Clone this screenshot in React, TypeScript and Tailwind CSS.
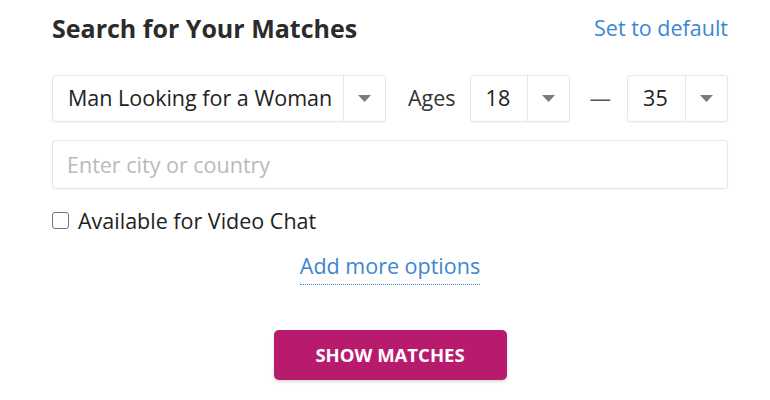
import React from "react";

// Search box for matches: gender select, age range, location, video chat flag.

function Caret() {
  return (
    <svg width="13" height="7" viewBox="0 0 13 7" className="block">
      <path d="M0 0 L13 0 L6.5 7 Z" fill="#7a7a7a" />
    </svg>
  );
}

function SelectBox({ value, width, textWidth }: { value: string; width: string; textWidth: string }) {
  return (
    <div
      className={`flex h-[47px] ${width} shrink-0 items-stretch rounded-[3px] border border-[#e6e6e6] bg-white shadow-[0_1px_2px_rgba(0,0,0,0.04)]`}
    >
      <div className={`flex ${textWidth} items-center pl-[15px] text-[21.5px] text-[#222]`}>{value}</div>
      <div className="flex flex-1 items-center justify-center border-l border-[#e6e6e6]">
        <Caret />
      </div>
    </div>
  );
}

export default function App() {
  return (
    <div
      className="h-[400px] w-[770px] bg-white pl-[52px] pr-[42px] pt-[13px]"
      style={{ fontFamily: '"Open Sans", sans-serif' }}
    >
      <div className="flex h-[30px] items-center justify-between">
        <h1 className="text-[25px] font-bold leading-[30px] text-[#2b2b2b]">Search for Your Matches</h1>
        <a className="text-[21.5px] leading-[30px] text-[#3d86d1]">Set to default</a>
      </div>

      <div className="mt-[32px] flex items-center">
        <SelectBox value="Man Looking for a Woman" width="w-[334px]" textWidth="w-[290px]" />
        <span className="ml-[22px] text-[21.5px] text-[#333]">Ages</span>
        <div className="ml-[14px]">
          <SelectBox value="18" width="w-[100px]" textWidth="w-[56px]" />
        </div>
        <span className="ml-[20px] mr-[16px] text-[21.5px] text-[#555]">—</span>
        <SelectBox value="35" width="w-[101px]" textWidth="w-[57px]" />
      </div>

      <input
        type="text"
        placeholder="Enter city or country"
        className="mt-[18px] block h-[49px] w-[676px] rounded-[3px] border border-[#e6e6e6] px-[14px] text-[21.5px] text-[#222] shadow-[0_1px_2px_rgba(0,0,0,0.04)] outline-none placeholder:text-[#bababa]"
      />

      <label className="mt-[17px] flex h-[29px] items-center">
        <span className="block h-[17px] w-[17px] rounded-[3px] border-[1.5px] border-[#767676] bg-white" />
        <span className="ml-[9px] text-[21.5px] leading-[29px] text-[#222]">Available for Video Chat</span>
      </label>

      <div className="mt-[17px] flex justify-center">
        <a className="border-b-[1.5px] border-dotted border-[#3d86d1] pb-[4px] text-[21.5px] leading-[28px] text-[#3d86d1]">
          Add more options
        </a>
      </div>

      <div className="mt-[45px] flex justify-center">
        <button className="h-[50px] w-[233px] rounded-[5px] bg-[#b81b6d] text-[18.5px] font-bold text-white shadow-[0_2px_3px_rgba(0,0,0,0.15)]">
          SHOW MATCHES
        </button>
      </div>
    </div>
  );
}
